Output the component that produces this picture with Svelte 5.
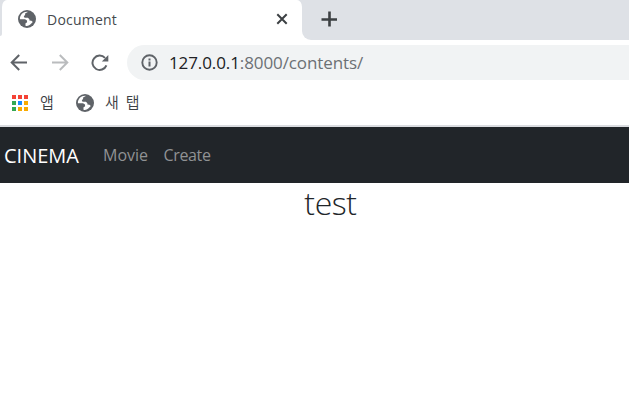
<script>
  const appColors = ['#f44336', '#f44336', '#f44336', '#34a853', '#1a8cff', '#f9ab00', '#34a853', '#f9ab00', '#f9ab00'];
</script>

{#snippet globe()}
  <svg class="globe" viewBox="0 0 18 18" width="18" height="18">
    <circle cx="9" cy="9" r="9" fill="#5f6368" />
    <path d="M9.8 1.9 7.1 3.5v1.3L5.8 6.4l.8 1.3h3.3l1.5 1.6v1.3l2 .2 1.4 1.1-1.5 1.7C11.6 15.7 9.8 16.2 7.6 15.9l-.2-2.5 1.7-1.1-.1-1.7-2-1.4H1.9C1.9 4.8 5.2 1.5 9.8 1.9Z" fill="#fff" />
  </svg>
{/snippet}

<div class="window">
  <div class="strip">
    <div class="edge"></div>
    <div class="tab">
      {@render globe()}
      <span class="title">Document</span>
      <svg class="close" width="12" height="12" viewBox="0 0 12 12"><path d="m1.3 1.3 9.4 9.4m0-9.4-9.4 9.4" stroke="#3c4043" stroke-width="2" /></svg>
    </div>
    <div class="rest">
      <svg width="16" height="16" viewBox="0 0 16 16"><path d="M8.5.5v15M.5 8.5h15.5" stroke="#3c4043" stroke-width="2.6" /></svg>
    </div>
  </div>

  <div class="toolbar">
    <svg class="back" width="18" height="18" viewBox="0 0 18 18"><path d="M17 8.5H2M9.2 1 1.7 8.5 9.2 16" fill="none" stroke="#5f6368" stroke-width="2" /></svg>
    <svg class="forward" width="18" height="18" viewBox="0 0 18 18"><path d="M1 8.5h15M8.8 1l7.5 7.5L8.8 16" fill="none" stroke="#babcbe" stroke-width="2" /></svg>
    <svg class="reload" width="18" height="18" viewBox="0 0 18 18"><path d="M15.4 11.4A7.2 7.2 0 1 1 14 3.9" fill="none" stroke="#5f6368" stroke-width="2" /><path d="M17.3.9v6.5h-6.5Z" fill="#5f6368" /></svg>
    <div class="address">
      <svg width="18" height="18" viewBox="0 0 18 18"><circle cx="8.5" cy="8.5" r="7.2" fill="none" stroke="#5f6368" stroke-width="1.9" /><path d="M8.5 4.4v2M8.5 7.6v5" stroke="#5f6368" stroke-width="2" /></svg>
      <span class="url"><b>127.0.0.1</b>:8000/contents/</span>
    </div>
  </div>

  <div class="bookmarks">
    <div class="apps">
      {#each appColors as color}<i style="background:{color}"></i>{/each}
    </div>
    <span class="app-label">앱</span>
    {@render globe()}
    <span class="new-label">새 탭</span>
  </div>

  <nav>
    <span class="brand">CINEMA</span>
    <span class="movie">Movie</span>
    <span class="create">Create</span>
  </nav>

  <main><h1>test</h1></main>
</div>

<style>
  :global(body) { background: #fff; overflow: hidden; }
  .window {
    width: 629px; height: 414px; overflow: hidden; background: #fff;
    font-family: "Open Sans", "Noto Sans CJK KR", sans-serif;
  }
  svg { display: block; flex: none; }
  span { white-space: nowrap; }
  .strip { display: flex; height: 40px; background: linear-gradient(#dee1e6 20px, #fff 20px); }
  .edge { width: 2px; height: 36px; background: #dee1e6; border-bottom-right-radius: 2px; }
  .tab {
    display: flex; align-items: center; box-sizing: border-box; width: 300px; height: 40px;
    padding: 0 14px 2px 16px; background: #fff; border-radius: 5px 5px 0 0 / 7px 7px 0 0;
  }
  .title { margin-left: 11px; font-size: 14px; color: #45494d; letter-spacing: 0.22px; }
  .close { margin-left: auto; }
  .rest {
    flex: 1; display: flex; align-items: center; padding: 0 0 2px 19px;
    background: #dee1e6; border-bottom-left-radius: 9px;
  }
  .toolbar { display: flex; align-items: center; height: 45px; }
  .back { margin-left: 10px; }
  .forward { margin-left: 23px; }
  .reload { margin-left: 22px; }
  .address {
    display: flex; align-items: center; flex: 1; height: 35px; margin-left: 18px;
    padding-left: 14px; background: #f1f3f4; border-radius: 18px 0 0 18px;
  }
  .url { margin-left: 10px; font-size: 17px; color: #6c7074; letter-spacing: -0.1px; }
  .url b { font-weight: 400; color: #202124; }
  .bookmarks {
    display: flex; align-items: center; height: 40px; box-sizing: border-box;
    padding: 0 0 5px 12px; color: #3c4043; font-size: 15px;
  }
  .apps { display: grid; grid-template-columns: repeat(3, 4px); gap: 2px; }
  .apps i { width: 4px; height: 4px; }
  .app-label, .new-label { padding-bottom: 3px; font-weight: 350; }
  .app-label { width: 16px; margin: 0 20px 0 12px; }
  .new-label { margin-left: 11px; word-spacing: 3px; }
  nav {
    display: flex; align-items: center; box-sizing: border-box; height: 58px;
    border-top: 2px solid #dadce0; background: #212529; padding-left: 4px;
  }
  .brand { width: 99px; color: #fff; font-size: 20px; }
  .movie { width: 60.5px; color: #909294; font-size: 16px; }
  .create { color: #909294; font-size: 16px; letter-spacing: -0.35px; }
  main { display: flex; justify-content: center; padding-left: 32px; }
  h1 { margin: 0; font-size: 32px; line-height: 40px; font-weight: 350; letter-spacing: -0.4px; color: #212529; }
</style>
